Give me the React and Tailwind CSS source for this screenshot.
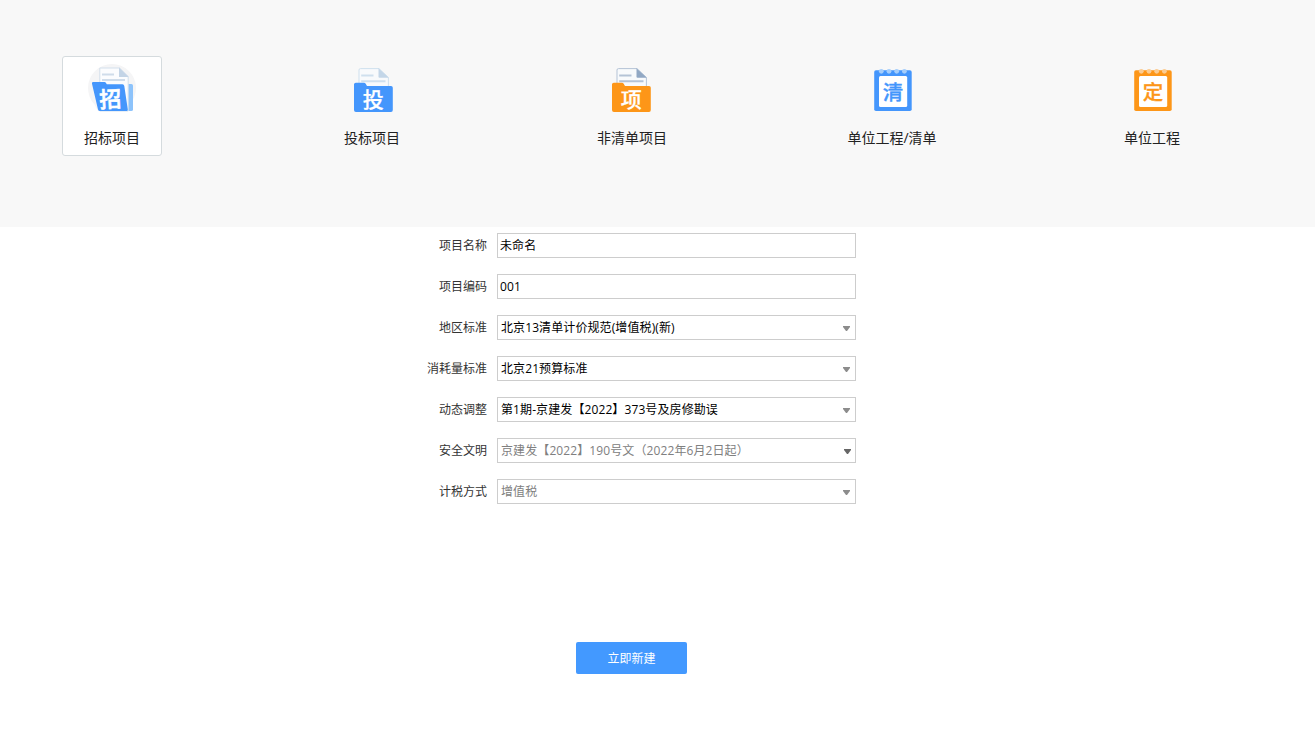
import React, { useState } from 'react';
import clsx from 'clsx';

const BidInviteIcon = () => (
  <svg width="48" height="48" viewBox="0 0 48 48" className="overflow-visible">
    <path d="M6.5 40.5A24 24 0 1 1 41.5 40.5L39 47H10Z" fill="#f5f5f6" />
    <path d="M34 20H43.4Q45 20 45 21.5V45.5Q45 47 43.4 47H34Z" fill="#8dc3fb" />
    <path d="M11.8 4H31.5L40.2 12.5V47H11.8Z" fill="#fbfcfe" stroke="#d3dfec" strokeWidth="1" />
    <path d="M31 3.5L40.7 13H31Z" fill="#c3d4e6" />
    <path d="M14 10.5H26M14 16H37" stroke="#cfdcea" strokeWidth="2" />
    <path d="M5 18H16.5Q17.5 18 18 19L18.8 20.3H34.5Q36 20.3 36.3 22L39.8 45.5Q40 47 38.5 47H12Q10.5 47 10 45.5L4 19.8Q3.6 18 5 18Z" fill="#4496fc" />
    <text x="22.3" y="43.2" fontSize="22" fontWeight="500" textAnchor="middle" fill="#fff" stroke="#fff" strokeWidth="0.6" transform="rotate(-3 22.3 36)">招</text>
  </svg>
);

const FolderIcon = ({ text, color, line, fold, shift = 0 }) => (
  <svg width="48" height="48" viewBox="0 0 48 48" className="overflow-visible">
    <g transform={`translate(${shift} 0)`}>
      <path d="M12.5 4.6H31L40.4 13.5V26H11V6Q11 4.6 12.5 4.6Z" fill="#f8fafc" stroke={line} strokeWidth="1" />
      <path d="M30.5 4.2L40.8 13.8H31.5Q30.5 13.8 30.5 12.8Z" fill={fold} />
      <path d="M13.2 11.5H25.5M13.2 17.2H37.5" stroke={line} strokeWidth="1.9" />
      <path d="M7.8 18.7H16Q17 18.7 17.5 19.6L19 22H43Q44.8 22 44.8 23.8V46Q44.8 48 43 48H8Q6 48 6 46V20.5Q6 18.7 7.8 18.7Z" fill={color} />
      <text x="25.2" y="42.8" fontSize="21" fontWeight="500" textAnchor="middle" fill="#fff" stroke="#fff" strokeWidth="0.25">{text}</text>
    </g>
  </svg>
);

const NotepadIcon = ({ text, color, ring }) => (
  <svg width="48" height="48" viewBox="0 0 48 48" className="overflow-visible">
    <rect x="6.2" y="6.2" width="37.5" height="40.8" rx="1.8" fill={color} />
    <rect x="11" y="12" width="28.2" height="31" rx="1.5" fill="#fff" />
    {[13.3, 21, 28.7, 36.4].map((cx) => (
      <circle key={cx} cx={cx} cy="7.3" r="2.4" fill={ring} />
    ))}
    <text x="25.1" y="35.5" fontSize="20.5" fontWeight="500" textAnchor="middle" fill={color} stroke={color} strokeWidth="0.3">{text}</text>
  </svg>
);

const projectTypes = [
  { label: '招标项目', icon: <BidInviteIcon /> },
  { label: '投标项目', icon: <FolderIcon text="投" color="#4496fc" line="#cfe0ee" fold="#c3d6e8" /> },
  { label: '非清单项目', icon: <FolderIcon text="项" color="#fd9618" line="#b4c3d6" fold="#91a8c4" shift={-2} /> },
  { label: '单位工程/清单', icon: <NotepadIcon text="清" color="#4496fc" ring="#a4cdfb" /> },
  { label: '单位工程', icon: <NotepadIcon text="定" color="#fd9618" ring="#fbcb91" /> }
];

const fields = [
  { label: '项目名称', value: '未命名' },
  { label: '项目编码', value: '001' },
  { label: '地区标准', value: '北京13清单计价规范(增值税)(新)', select: true },
  { label: '消耗量标准', value: '北京21预算标准', select: true },
  { label: '动态调整', value: '第1期-京建发【2022】373号及房修勘误', select: true },
  { label: '安全文明', value: '京建发【2022】190号文（2022年6月2日起）', select: true, disabled: true, dark: true },
  { label: '计税方式', value: '增值税', select: true, disabled: true }
];

const Field = ({ label, value, select, disabled, dark }) => (
  <div className="flex h-[25px] items-center">
    <span className="w-[487px] text-right text-[#333]">{label}</span>
    <div
      className={clsx(
        'ml-2.5 flex h-full w-[359px] items-center justify-between border border-[#cdcdcd] bg-white',
        select ? 'pl-[3px]' : 'pl-0.5',
        dark ? 'pr-1' : 'pr-[5px]',
        disabled ? 'text-[#808080]' : 'text-black'
      )}
    >
      <span className="whitespace-nowrap tracking-[0.1px]">{value}</span>
      {select && (
        <svg width="7" height="5" viewBox="0 0 7 5" className={clsx('mt-px', dark ? 'text-[#666]' : 'text-[#8c8c8c]')}>
          <path d="M0 0H7V1L4 5H3L0 1Z" fill="currentColor" />
        </svg>
      )}
    </div>
  </div>
);

const App = () => {
  const [active, setActive] = useState(0);

  return (
    <div className="h-[750px] w-[1315px] overflow-hidden bg-white font-['Open_Sans','Noto_Sans_CJK_SC',sans-serif] text-xs">
      {/* Project types */}
      <div className="flex h-[227px] gap-40 bg-[#f8f8f8] pl-[62px] pt-14">
        {projectTypes.map((type, index) => (
          <button
            key={type.label}
            onClick={() => setActive(index)}
            className={clsx(
              'flex h-[100px] w-[100px] shrink-0 flex-col items-center rounded-[3px] border pt-[7px]',
              active === index ? 'border-[#d5dbde] bg-white' : 'border-transparent'
            )}
          >
            {type.icon}
            <span className="mt-4 whitespace-nowrap text-sm leading-5 text-[#222]">{type.label}</span>
          </button>
        ))}
      </div>

      {/* Form */}
      <div className="flex flex-col gap-4 pt-1.5">
        {fields.map((field) => (
          <Field key={field.label} {...field} />
        ))}
      </div>

      <button className="ml-[576px] mt-[138px] flex h-8 w-[111px] items-center justify-center rounded-xs bg-[#4399ff] pt-0.5 text-white">
        立即新建
      </button>
    </div>
  );
};

export default App;
